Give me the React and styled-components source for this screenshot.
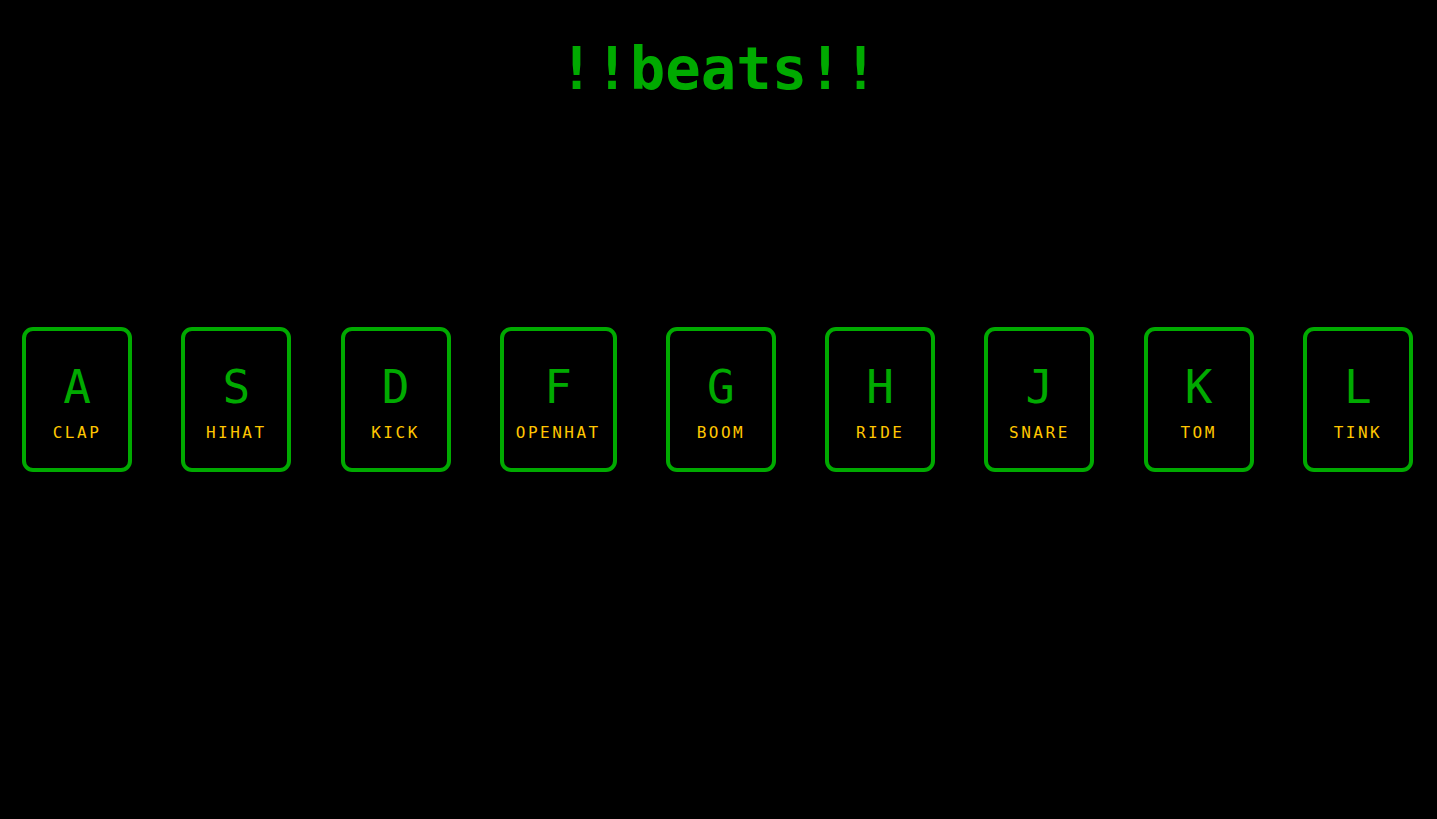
import React from "react";
import styled, { createGlobalStyle } from "styled-components";

const Global = createGlobalStyle`
  html, body { margin: 0; padding: 0; background: #000; }
  body { font-family: "DejaVu Sans Mono", monospace; }
`;

const Page = styled.div`
  min-height: 100vh;
  background: #000;
  display: flex;
  flex-direction: column;
`;

const Title = styled.h1`
  margin: 34px 0 0;
  text-align: center;
  font-size: 59px;
  line-height: 70px;
  font-weight: bold;
  color: #00aa00;
`;

const Keys = styled.div`
  margin-top: 223px;
  padding: 0 24px 0 22px;
  display: flex;
  justify-content: space-between;
  align-items: flex-start;
`;

const Key = styled.div`
  box-sizing: border-box;
  min-width: 110px;
  height: 145px;
  padding: 33px 12px 0;
  border: 4px solid #00aa00;
  border-radius: 11px;
  display: flex;
  flex-direction: column;
  align-items: center;
  justify-content: flex-start;
`;

const Letter = styled.kbd`
  font-family: "DejaVu Sans Mono", monospace;
  font-size: 46px;
  line-height: 46px;
  color: #00aa00;
`;

const Sound = styled.span`
  font-size: 16px;
  line-height: 16px;
  letter-spacing: 2.5px;
  margin-top: 15px;
  color: #ffc600;
`;

const keys = [
  ["A", "CLAP"],
  ["S", "HIHAT"],
  ["D", "KICK"],
  ["F", "OPENHAT"],
  ["G", "BOOM"],
  ["H", "RIDE"],
  ["J", "SNARE"],
  ["K", "TOM"],
  ["L", "TINK"],
];

export default function App() {
  return (
    <Page>
      <Global />
      <Title>!!beats!!</Title>
      <Keys>
        {keys.map(([k, s]) => (
          <Key key={k}>
            <Letter>{k}</Letter>
            <Sound>{s}</Sound>
          </Key>
        ))}
      </Keys>
    </Page>
  );
}
